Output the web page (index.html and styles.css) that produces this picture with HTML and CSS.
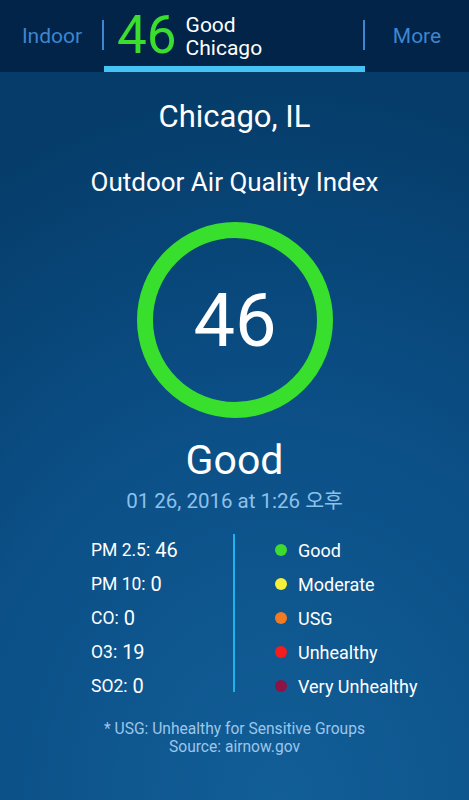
FILE: index.html
```html
<!DOCTYPE html>
<html>
<head>
<meta charset="utf-8">
<link rel="stylesheet" href="styles.css">
</head>
<body>
<div class="app">
  <header class="topbar">
    <div class="tab side">Indoor</div>
    <div class="tab current">
      <span class="cur-aqi">46</span>
      <span class="cur-info"><span>Good</span><span>Chicago</span></span>
    </div>
    <div class="tab side">More</div>
  </header>
  <main class="content">
    <h1 class="city">Chicago, IL</h1>
    <h2 class="subtitle">Outdoor Air Quality Index</h2>
    <div class="ring"><span class="ring-value">46</span></div>
    <div class="status">Good</div>
    <div class="date">01 26, 2016 at 1:26 오후</div>
    <section class="details">
      <ul class="pollutants">
        <li><span class="lbl">PM 2.5:</span> <span class="val">46</span></li>
        <li><span class="lbl">PM 10:</span> <span class="val">0</span></li>
        <li><span class="lbl">CO:</span> <span class="val">0</span></li>
        <li><span class="lbl">O3:</span> <span class="val">19</span></li>
        <li><span class="lbl">SO2:</span> <span class="val">0</span></li>
      </ul>
      <div class="vline"></div>
      <ul class="legend">
        <li><span class="dot good"></span>Good</li>
        <li><span class="dot moderate"></span>Moderate</li>
        <li><span class="dot usg"></span>USG</li>
        <li><span class="dot unhealthy"></span>Unhealthy</li>
        <li><span class="dot very"></span>Very Unhealthy</li>
      </ul>
    </section>
    <footer class="note">
      <div>* USG: Unhealthy for Sensitive Groups</div>
      <div>Source: airnow.gov</div>
    </footer>
  </main>
</div>
</body>
</html>
```
FILE: styles.css
```css
* { box-sizing: border-box; }
html, body { margin: 0; padding: 0; }
body {
  width: 469px;
  height: 800px;
  overflow: hidden;
  font-family: Roboto, "Noto Sans", "Noto Sans CJK KR", sans-serif;
  color: #ffffff;
  background: #0b4d82;
}
.app {
  width: 469px;
  height: 800px;
  display: flex;
  flex-direction: column;
  background: radial-gradient(ellipse 130% 90% at 60% 100%, #125e97 0%, #0b4f86 55%, #053c69 100%);
}
.topbar {
  height: 72px;
  background: #022449;
  display: flex;
  align-items: stretch;
}
.tab {
  display: flex;
  align-items: center;
}
.tab.side {
  flex: 1 1 0;
  justify-content: center;
  color: #3e86cf;
  font-size: 21px;
}
.tab.current {
  width: 261px;
  flex: 0 0 261px;
  border-bottom: 6px solid #45c3f5;
  padding-left: 13px;
  position: relative;
  gap: 9px;
  padding-top: 4px;
}
.tab.current::before,
.tab.current::after {
  content: "";
  position: absolute;
  top: 20px;
  width: 2px;
  height: 30px;
  background: #3e86cf;
}
.tab.current::before { left: -2px; }
.tab.current::after { right: 0; }
.cur-aqi {
  color: #3bdd2e;
  font-size: 53px;
  line-height: 1;
}
.cur-info {
  display: flex;
  flex-direction: column;
  font-size: 21px;
  line-height: 23px;
  padding-top: 3px;
}
.content {
  flex: 1;
  display: flex;
  flex-direction: column;
  align-items: center;
}
.city {
  margin: 25px 0 0;
  font-size: 31px;
  font-weight: 400;
  line-height: 40px;
}
.subtitle {
  margin: 30px 0 0;
  font-size: 26px;
  font-weight: 400;
  line-height: 30px;
}
.ring {
  margin-top: 25px;
  margin-left: 1px;
  width: 196px;
  height: 196px;
  border-radius: 50%;
  border: 16px solid #38df2c;
  display: flex;
  align-items: center;
  justify-content: center;
}
.ring-value {
  font-size: 74px;
  line-height: 1;
  padding-top: 2px;
}
.status {
  margin-top: 17px;
  font-size: 41px;
  line-height: 50px;
}
.date {
  margin-top: 3px;
  font-size: 20.5px;
  line-height: 26px;
  color: #8ec1e9;
}
.details {
  margin-top: 19px;
  display: flex;
  align-items: flex-start;
  width: 100%;
  padding-left: 91px;
}
.pollutants, .legend {
  list-style: none;
  margin: 0;
  padding: 0;
}
.pollutants li, .legend li {
  height: 34px;
  display: flex;
  align-items: center;
  font-size: 17.5px;
}
.legend li { font-size: 18px; }
.pollutants { width: 142px; }
.pollutants li { gap: 5px; }
.val { font-size: 20px; }
.vline {
  width: 2px;
  height: 158px;
  margin-top: 1px;
  background: #1fb2ee;
}
.legend { padding-left: 40px; }
.legend li { gap: 11px; }
.dot {
  width: 12px;
  height: 12px;
  border-radius: 50%;
  display: inline-block;
}
.dot.good { background: #3ddc2e; }
.dot.moderate { background: #f4ef3a; }
.dot.usg { background: #f27a22; }
.dot.unhealthy { background: #f41c1c; }
.dot.very { background: #8c1445; }
.note {
  margin-top: 17px;
  text-align: center;
  font-size: 15.6px;
  line-height: 18px;
  color: #9dc6ea;
}
```
